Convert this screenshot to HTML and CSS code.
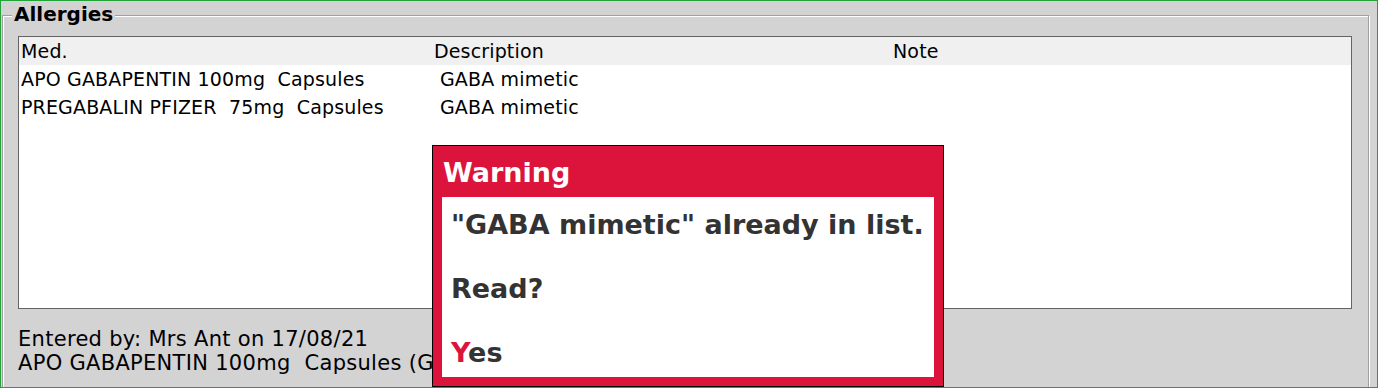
FILE: index.html
```html
<!DOCTYPE html>
<html lang="en">

<head>
    <meta charset="UTF-8">
    <meta name="viewport" content="width=device-width, initial-scale=1.0">
    <title>Allergies</title>
    <link rel="stylesheet" href="styles.css">
</head>

<body>
    <div class="window">
        <fieldset class="group">
            <legend class="group-title">Allergies</legend>
            <div class="list">
                <div class="list-row list-head">
                    <div class="cell">Med.</div>
                    <div class="cell">Description</div>
                    <div class="cell">Note</div>
                </div>
                <div class="list-row">
                    <div class="cell">APO GABAPENTIN 100mg  Capsules</div>
                    <div class="cell desc">GABA mimetic</div>
                    <div class="cell"></div>
                </div>
                <div class="list-row">
                    <div class="cell">PREGABALIN PFIZER  75mg  Capsules</div>
                    <div class="cell desc">GABA mimetic</div>
                    <div class="cell"></div>
                </div>
            </div>
            <div class="details">
                <div class="detail-line">Entered by: Mrs Ant on 17/08/21</div>
                <div class="detail-line">APO GABAPENTIN 100mg  Capsules (Gaba mimetic)</div>
            </div>
        </fieldset>

        <div class="dialog">
            <div class="dialog-title">Warning</div>
            <div class="dialog-body">
                <div class="line">"GABA mimetic" already in list.</div>
                <div class="line gap">Read?</div>
                <div class="line gap"><span class="hotkey">Y</span>es</div>
            </div>
        </div>
    </div>
</body>

</html>
```

FILE: styles.css
```css
body {
    margin: 0;
    padding: 0;
    font-family: "DejaVu Sans", Verdana, sans-serif;
}

.window {
    position: relative;
    box-sizing: border-box;
    width: 1378px;
    height: 388px;
    border: 1px solid #22a33a;
    background-color: #d3d3d3;
    overflow: hidden;
}

.group {
    margin: 1px 8px 0 1px;
    padding: 0 16px 0 15px;
    height: 420px;
    border: 1px solid #a0a0a0;
    box-shadow: 1px 1px 0 #fff, inset 1px 1px 0 #fff;
}

.group-title {
    margin-left: -6px;
    padding: 0 2px 3px 2px;
    font-size: 20px;
    font-weight: bold;
    line-height: 24px;
    color: #000;
    background-color: #d3d3d3;
}

.list {
    margin-top: 7px;
    height: 271px;
    border: 1px solid #646464;
    background-color: #fff;
}

.list-row {
    display: grid;
    grid-template-columns: 413px 459px 1fr;
    height: 28px;
    font-size: 19px;
    line-height: 28px;
    letter-spacing: 0.15px;
    color: #000;
}

.list-head {
    background-color: #f0f0f0;
}

.cell {
    padding-left: 2px;
    overflow: hidden;
    white-space: pre;
}

.desc {
    padding-left: 8px;
}

.details {
    margin-top: 18px;
    font-size: 21px;
    line-height: 24px;
    letter-spacing: 0.3px;
    color: #000;
}

.detail-line {
    white-space: pre;
}

/* warning popup sits on top of the list */
.dialog {
    position: absolute;
    left: 431px;
    top: 144px;
    width: 492px;
    padding: 0 9px 9px 9px;
    border: 1px solid #000;
    background-color: #dc143c;
}

.dialog-title {
    padding: 11px 1px 8px 1px;
    font-size: 27px;
    font-weight: bold;
    line-height: 32px;
    color: #fff;
}

.dialog-body {
    padding: 12px 9px 8px 9px;
    background-color: #fff;
    font-size: 27px;
    font-weight: bold;
    line-height: 32px;
    color: #333;
    white-space: nowrap;
}

.gap {
    margin-top: 32px;
}

.hotkey {
    color: #dc143c;
}
```
